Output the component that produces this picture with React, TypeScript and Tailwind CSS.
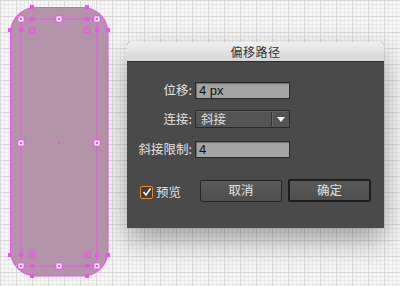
import React from "react";

const MAG = "#f050f0";

const Handle = ({ x, y }: { x: number; y: number }) => (
  <g>
    <rect x={x - 3.5} y={y - 3.5} width={7} height={7} fill={MAG} />
    <rect x={x - 2.5} y={y - 2.5} width={5} height={5} fill="#fff" />
    <rect x={x - 1} y={y - 1} width={2} height={2} fill={MAG} />
  </g>
);

const Dot = ({ x, y }: { x: number; y: number }) => (
  <rect x={x - 2} y={y - 2} width={4} height={4} fill={MAG} />
);

const Ring = ({ x, y }: { x: number; y: number }) => (
  <g>
    <circle cx={x} cy={y} r={3} fill="none" stroke={MAG} strokeWidth={1.2} />
    <circle cx={x} cy={y} r={1} fill={MAG} />
  </g>
);

const Shape = () => (
  <svg width="120" height="286" viewBox="0 0 120 286" className="absolute left-0 top-0">
    <rect x={10.5} y={7.5} width={97.5} height={268.5} rx={25} fill="#b494a9" stroke={MAG} strokeWidth={1} />
    <rect x={21} y={19} width={76} height={247} fill="none" stroke={MAG} strokeWidth={1} />
    {[
      [32, 7], [87, 7], [32, 276], [87, 276],
      [10, 30], [21, 30], [97, 30], [108, 30],
      [10, 255], [21, 255], [97, 255], [108, 255],
      [32, 19], [87, 19], [32, 266], [87, 266],
    ].map(([x, y]) => (
      <Dot key={`${x}-${y}`} x={x} y={y} />
    ))}
    {[[32, 30], [87, 30], [32, 255], [87, 255]].map(([x, y]) => (
      <Ring key={`r${x}-${y}`} x={x} y={y} />
    ))}
    {[
      [21, 19], [59, 19], [97, 19],
      [21, 143], [97, 143],
      [21, 266], [59, 266], [97, 266],
    ].map(([x, y]) => (
      <Handle key={`h${x}-${y}`} x={x} y={y} />
    ))}
    <rect x={58} y={142} width={2} height={2} fill={MAG} />
  </svg>
);

const Label = ({ children }: { children: React.ReactNode }) => (
  <span className="w-[65px] text-right text-[12.5px] leading-none text-[#e2e2e2]">{children}</span>
);

export default function App() {
  return (
    <div
      className="relative w-[400px] h-[286px] overflow-hidden bg-[#f7f7f7] bg-[linear-gradient(to_right,#d9d9d9_1px,transparent_1px),linear-gradient(to_bottom,#d9d9d9_1px,transparent_1px),linear-gradient(to_right,#e9e9e9_1px,transparent_1px),linear-gradient(to_bottom,#e9e9e9_1px,transparent_1px)] bg-[size:16px_16px,16px_16px,4px_4px,4px_4px]"
      style={{ fontFamily: '"Noto Sans CJK SC", "Liberation Sans", sans-serif' }}
    >
      <Shape />

      <div className="absolute left-[127px] top-[42px] w-[257px] h-[186px] flex flex-col rounded-t-[4px] bg-[#4a4a4a] shadow-[0_12px_28px_rgba(0,0,0,0.35)]">
        <div className="h-[20px] flex items-center justify-center rounded-t-[4px] bg-[linear-gradient(#f0f0f0,#d6d6d6)] border-b border-[#2e2e2e] text-[12px] text-[#333] tracking-[0.5px]">
          偏移路径
        </div>

        <div className="flex flex-col pt-[20px]">
          <div className="flex items-center gap-[3px]">
            <Label>位移:</Label>
            <div className="w-[95px] h-[17px] flex items-center px-[3px] bg-[#a4a4a4] border border-[#2a2a2a] shadow-[inset_1px_1px_1px_rgba(0,0,0,0.35)] text-[13px] text-[#111]" style={{ fontFamily: '"Liberation Sans", sans-serif' }}>
              4 px
            </div>
          </div>

          <div className="flex items-center gap-[3px] mt-[11px]">
            <Label>连接:</Label>
            <div className="w-[95px] h-[18px] flex items-center bg-[#545454] border border-[#2a2a2a] shadow-[inset_0_1px_0_rgba(255,255,255,0.08)]">
              <span className="flex-1 pl-[5px] text-[12.5px] leading-none text-[#dedede]">斜接</span>
              <span className="w-px h-[14px] bg-[#333]" />
              <span className="w-px h-[14px] bg-[#666]" />
              <svg width="14" height="10" viewBox="0 0 14 10" className="mx-[1px]">
                <path d="M3 3 L11 3 L7 8 Z" fill="#f2f2f2" />
              </svg>
            </div>
          </div>

          <div className="flex items-center gap-[3px] mt-[13px]">
            <Label>斜接限制:</Label>
            <div className="w-[95px] h-[17px] flex items-center px-[3px] bg-[#a4a4a4] border border-[#2a2a2a] shadow-[inset_1px_1px_1px_rgba(0,0,0,0.35)] text-[13px] text-[#111]" style={{ fontFamily: '"Liberation Sans", sans-serif' }}>
              4
            </div>
          </div>

          <div className="flex items-center mt-[21px] pl-[13px]">
            <div className="flex items-center gap-[3px] mt-[3px]">
              <div className="w-[13px] h-[13px] flex items-center justify-center rounded-[2px] border border-[#e0892e] bg-[#3e3e3e]">
                <svg width="10" height="10" viewBox="0 0 10 10">
                  <path d="M1.5 5 L4 8 L8.5 1.5" fill="none" stroke="#f4f4f4" strokeWidth="1.6" />
                </svg>
              </div>
              <span className="text-[12.5px] leading-none text-[#e2e2e2]">预览</span>
            </div>
            <button className="ml-[19px] w-[82px] h-[22px] flex items-center justify-center bg-[linear-gradient(#5a5a5a,#4e4e4e)] border border-[#262626] rounded-[2px] text-[12.5px] text-[#e2e2e2]">
              取消
            </button>
            <button className="ml-[6px] w-[83px] h-[23px] flex items-center justify-center bg-[linear-gradient(#5a5a5a,#4e4e4e)] border-2 border-[#1e1e1e] rounded-[2px] text-[12.5px] text-[#e2e2e2]">
              确定
            </button>
          </div>
        </div>
      </div>
    </div>
  );
}
